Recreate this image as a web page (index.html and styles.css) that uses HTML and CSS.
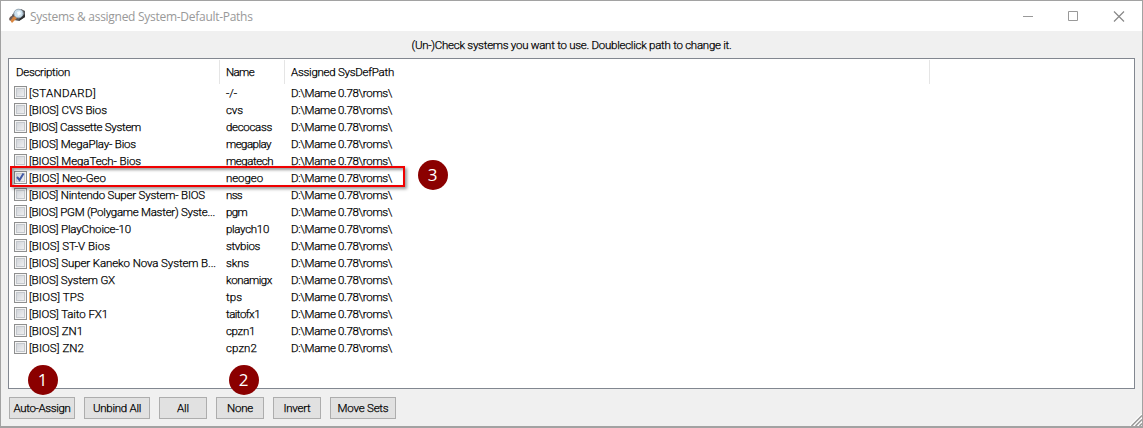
FILE: index.html
```html
<!DOCTYPE html>
<html lang="en">
<head>
<meta charset="utf-8">
<title>Systems &amp; assigned System-Default-Paths</title>
<link rel="stylesheet" href="styles.css">
</head>
<body>
<div class="window">
  <header class="titlebar">
    <svg class="app-icon" width="18" height="16" viewBox="0 0 18 16">
      <path d="M3 7L7 2L12 1L16 3L16 9L10 13L5 12Z" fill="#55565a"/>
      <path d="M11 10L16 6L16 9L10 13Z" fill="#2f3033"/>
      <path d="M1 12L5 8L8 10L3 15Z" fill="#d9853f"/>
      <path d="M0 11L1 9L4 7L5 8L1 13Z" fill="#6b5a55"/>
      <ellipse cx="9.500" cy="5.500" rx="4.600" ry="4.300" fill="#cbe0ee" stroke="#9cadb9"/>
      <path d="M8 4L11 3L12 6L9 8Z" fill="#f4fbff"/>
    </svg>
    <h1 class="title">Systems &amp; assigned System-Default-Paths</h1>
    <svg class="controls" width="104" height="12" viewBox="0 0 104 12">
      <path d="M0 6.500H10M45.500 1.500h9v9h-9z" fill="none" stroke="#999"/>
      <path d="M91 1.500l10 10M101 1.500l-10 10" fill="none" stroke="#888" stroke-width="1.200"/>
    </svg>
  </header>
  <p class="hint"><span data-width="320">(Un-)Check systems you want to use. Doubleclick path to change it.</span></p>
  <main class="list">
    <div class="head"><div><span data-width="54">Description</span></div><div><span data-width="28">Name</span></div><div><span data-width="103">Assigned SysDefPath</span></div></div>
    <div class="rows" id="rows"></div>
    <div class="highlight"></div>
    <b class="badge three">3</b>
    <b class="badge one">1</b>
    <b class="badge two">2</b>
  </main>
  <footer class="buttons">
    <button class="wide"><span data-width="57">Auto-Assign</span></button><button class="wide"><span data-width="48">Unbind All</span></button><button><span data-width="12">All</span></button><button><span data-width="26">None</span></button><button><span data-width="27">Invert</span></button><button class="wide"><span data-width="51">Move Sets</span></button>
  </footer>
  <svg class="grip" width="12" height="12" viewBox="0 0 12 12">
    <path d="M0 12L12 0M4 12L12 4M8 12L12 8" fill="none" stroke="#fff" stroke-width="1.500"/>
    <path d="M1.500 12L12 1.500M5.500 12L12 5.500M9.500 12L12 9.500" fill="none" stroke="#999" stroke-width="1.500"/>
  </svg>
</div>
<script src="app.js"></script>
</body>
</html>
```
FILE: styles.css
```css
* { box-sizing: border-box; }
body { margin: 0; width: 1143px; height: 428px; overflow: hidden; background: #a6a6a6; font: 300 11.5px/17px Roboto, "Liberation Sans", sans-serif; color: #000; -webkit-text-stroke: .25px #000; }
.window { position: relative; width: 1143px; height: 428px; border: 1px solid #a2a2a2; border-bottom-width: 2px; background: #f0f0f0; display: flex; flex-direction: column; }
.titlebar { height: 30px; background: #fff; display: flex; align-items: center; padding: 0 15px 0 8px; }
.app-icon { flex: none; }
.title { margin: 0 auto 0 3px; font: 12px/17px "Open Sans", "Noto Sans", sans-serif; color: #999; letter-spacing: -.28px; -webkit-text-stroke: 0; }
.controls { flex: none; }
.hint { margin: 0; height: 27px; padding-top: 6px; text-align: center; }
[data-width] { display: inline-block; white-space: nowrap; }
.list { position: relative; height: 331px; width: 1127px; margin-left: 7px; border: 1px solid #828790; background: #fff; }
.head { display: grid; grid-template-columns: 211px 65px 645px; height: 26px; padding-top: 1px; line-height: 25px; }
.head div { height: 24px; padding-left: 7px; border-right: 1px solid #e5e5e5; }
.head div + div { padding-left: 6px; }
.row { display: grid; grid-template-columns: 14px 197px 65px 1fr; height: 17px; padding-left: 5px; line-height: 17px; white-space: nowrap; }
.box { width: 13px; height: 13px; margin-top: 1px; border: 1px solid #8e8f8f; background: linear-gradient(135deg, #cbcfd5, #f6f6f6); box-shadow: inset 0 0 0 1px #f4f4f4, inset 0 0 0 2px #c4c8cd; display: block; }
.box svg { display: block; }
.desc, .name, .path { padding-left: 1px; }
.highlight { position: absolute; left: 1px; top: 107px; width: 395px; height: 21px; border: 2px solid #f00000; box-shadow: 2px 2px 3px #0006, inset 2px 2px 3px #0006; }
.badge { position: absolute; width: 30px; height: 30px; border-radius: 50%; background: #8b0000; color: #fff; font: 17px/30px "Open Sans", sans-serif; text-align: center; -webkit-text-stroke: 0; }
.three { left: 408.500px; top: 100.500px; }
.one { left: 18.500px; top: 305.500px; }
.two { left: 219.500px; top: 305.500px; }
.buttons { display: flex; gap: 9px; padding: 8px 0 0 8px; }
button { width: 48px; height: 22px; padding: 0; border: 1px solid #adadad; background: #e1e1e1; font: inherit; color: #000; white-space: nowrap; }
.wide { width: 66px; }
.grip { position: absolute; right: 0; bottom: 0; }
```
FILE: app.js
```js
// Each entry: description, description width, short name, name width.
const systems = [
  ["[STANDARD]", 67, "-/-", 11],
  ["[BIOS] CVS Bios", 78, "cvs", 17],
  ["[BIOS] Cassette System", 112, "decocass", 46],
  ["[BIOS] MegaPlay- Bios", 107, "megaplay", 45],
  ["[BIOS] MegaTech- Bios", 112, "megatech", 47],
  ["[BIOS] Neo-Geo", 77, "neogeo", 37],
  ["[BIOS] Nintendo Super System- BIOS", 176, "nss", 16],
  ["[BIOS] PGM (Polygame Master) Syste...", 186, "pgm", 21],
  ["[BIOS] PlayChoice-10", 102, "playch10", 43],
  ["[BIOS] ST-V Bios", 81, "stvbios", 34],
  ["[BIOS] Super Kaneko Nova System B...", 187, "skns", 23],
  ["[BIOS] System GX", 86, "konamigx", 46],
  ["[BIOS] TPS", 55, "tps", 16],
  ["[BIOS] Taito FX1", 79, "taitofx1", 34],
  ["[BIOS] ZN1", 54, "cpzn1", 29],
  ["[BIOS] ZN2", 55, "cpzn2", 31]
];
const check = '<svg width="11" height="11" viewBox="0 0 11 11"><path d="M2 5L4.500 8L8.500 1.500" fill="none" stroke="#4159a5" stroke-width="2"/></svg>';
const label = (text, width) => `<span data-width="${width}">${text}</span>`;
document.getElementById("rows").innerHTML = systems.map(([desc, dw, name, nw]) =>
  `<div class="row"><i class="box">${name === "neogeo" ? check : ""}</i><div class="desc">${label(desc, dw)}</div><div class="name">${label(name, nw)}</div><div class="path">${label("D:\\Mame 0.78\\roms\\", 101)}</div></div>`
).join("");

// Tighten or loosen the tracking so each label fills its width.
for (const el of document.querySelectorAll("[data-width]")) {
  const natural = el.getBoundingClientRect().width;
  el.style.letterSpacing = (el.dataset.width - natural) / el.textContent.length + "px";
}
```
